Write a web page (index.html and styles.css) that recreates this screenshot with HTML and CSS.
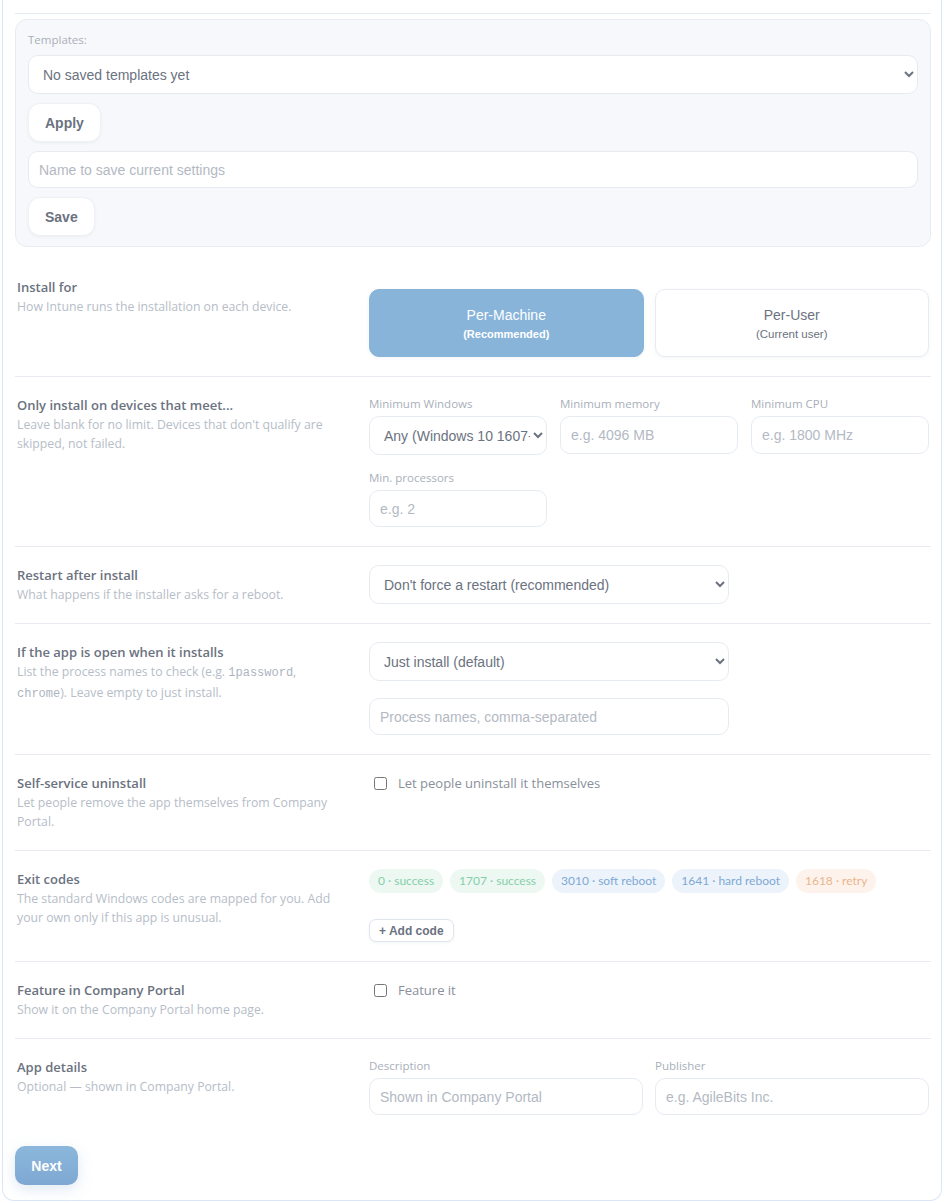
FILE: index.html
```html
<!DOCTYPE html>
<html lang="en">
<head>
    <meta charset="UTF-8"/>
    <title>Program settings</title>
    <link rel="stylesheet" href="styles.css">
</head>
<body>
<div class="card">
    <div class="card-head"></div>

    <!-- saved templates -->
    <div class="templates">
        <div class="templates-label">Templates:</div>
        <select class="field select">
            <option>No saved templates yet</option>
        </select>
        <div><button class="soft-btn">Apply</button></div>
        <input class="field short" type="text" placeholder="Name to save current settings">
        <div><button class="soft-btn">Save</button></div>
    </div>

    <div class="rows">
        <div class="row">
            <div class="row-info">
                <div class="row-title">Install for</div>
                <div class="row-desc">How Intune runs the installation on each device.</div>
            </div>
            <div class="row-ctrl">
                <div class="segmented">
                    <button class="seg seg-on">Per-Machine<small>(Recommended)</small></button>
                    <button class="seg">Per-User<small>(Current user)</small></button>
                </div>
            </div>
        </div>

        <div class="row">
            <div class="row-info">
                <div class="row-title">Only install on devices that meet...</div>
                <div class="row-desc">Leave blank for no limit. Devices that don't qualify are skipped, not failed.</div>
            </div>
            <div class="row-ctrl grid-3">
                <label class="fld">
                    <span class="fld-label">Minimum Windows</span>
                    <select class="field select tight">
                        <option>Any (Windows 10 1607+)</option>
                    </select>
                </label>
                <label class="fld">
                    <span class="fld-label">Minimum memory</span>
                    <input class="field" type="text" placeholder="e.g. 4096 MB">
                </label>
                <label class="fld">
                    <span class="fld-label">Minimum CPU</span>
                    <input class="field" type="text" placeholder="e.g. 1800 MHz">
                </label>
                <label class="fld">
                    <span class="fld-label">Min. processors</span>
                    <input class="field short" type="text" placeholder="e.g. 2">
                </label>
            </div>
        </div>

        <div class="row">
            <div class="row-info">
                <div class="row-title">Restart after install</div>
                <div class="row-desc">What happens if the installer asks for a reboot.</div>
            </div>
            <div class="row-ctrl">
                <select class="field select narrow">
                    <option>Don't force a restart (recommended)</option>
                </select>
            </div>
        </div>

        <div class="row">
            <div class="row-info">
                <div class="row-title">If the app is open when it installs</div>
                <div class="row-desc">List the process names to check (e.g. <code>1password</code>, <code>chrome</code>). Leave empty to just install.</div>
            </div>
            <div class="row-ctrl stack">
                <select class="field select narrow">
                    <option>Just install (default)</option>
                </select>
                <input class="field narrow short" type="text" placeholder="Process names, comma-separated">
            </div>
        </div>

        <div class="row">
            <div class="row-info">
                <div class="row-title">Self-service uninstall</div>
                <div class="row-desc">Let people remove the app themselves from Company Portal.</div>
            </div>
            <div class="row-ctrl">
                <label class="check"><input type="checkbox"> Let people uninstall it themselves</label>
            </div>
        </div>

        <div class="row">
            <div class="row-info">
                <div class="row-title">Exit codes</div>
                <div class="row-desc">The standard Windows codes are mapped for you. Add your own only if this app is unusual.</div>
            </div>
            <div class="row-ctrl">
                <div class="chips">
                    <span class="chip chip-green">0 · success</span>
                    <span class="chip chip-green">1707 · success</span>
                    <span class="chip chip-blue">3010 · soft reboot</span>
                    <span class="chip chip-blue">1641 · hard reboot</span>
                    <span class="chip chip-orange">1618 · retry</span>
                </div>
                <button class="add-btn">+ Add code</button>
            </div>
        </div>

        <div class="row">
            <div class="row-info">
                <div class="row-title">Feature in Company Portal</div>
                <div class="row-desc">Show it on the Company Portal home page.</div>
            </div>
            <div class="row-ctrl">
                <label class="check"><input type="checkbox"> Feature it</label>
            </div>
        </div>

        <div class="row">
            <div class="row-info">
                <div class="row-title">App details</div>
                <div class="row-desc">Optional — shown in Company Portal.</div>
            </div>
            <div class="row-ctrl grid-2">
                <label class="fld">
                    <span class="fld-label">Description</span>
                    <input class="field short" type="text" placeholder="Shown in Company Portal">
                </label>
                <label class="fld">
                    <span class="fld-label">Publisher</span>
                    <input class="field short" type="text" placeholder="e.g. AgileBits Inc.">
                </label>
            </div>
        </div>
    </div>

    <button class="next-btn">Next</button>
</div>
</body>
</html>
```

FILE: styles.css
```css
/* page */
body {
    margin: 0;
    background: #ffffff;
    font-family: "Open Sans", "Noto Sans", sans-serif;
}

.card {
    margin: 0 2px 2px 2px;
    padding: 0 10px 15px 12px;
    border: 1px solid #d9e6f5;
    border-top: none;
    border-radius: 0 0 12px 12px;
}

.card-head {
    height: 13px;
    border-bottom: 1px solid #e6ecf3;
}

/* form fields */
.field {
    display: block;
    box-sizing: border-box;
    width: 100%;
    height: 38px;
    padding: 0 10px;
    border: 1px solid #e6ebf2;
    border-radius: 10px;
    background: #ffffff;
    font-family: "Liberation Sans", Arial, sans-serif;
    font-size: 14px;
    color: #6b7280;
    outline: none;
}

.field.short {
    height: 37px;
}

.field::placeholder {
    color: #b3b9c3;
}

.select {
    height: 39px;
    padding: 0 10px;
}

.select.tight {
    padding-right: 0;
}

.narrow {
    max-width: 360px;
}

/* templates box */
.templates {
    margin-top: 5px;
    padding: 12px 12px 10px 12px;
    background: #f7f8fb;
    border: 1px solid #e8ecf2;
    border-radius: 12px;
    display: flex;
    flex-direction: column;
    gap: 9px;
}

.templates-label {
    font-size: 11.5px;
    line-height: 16px;
    color: #a9afba;
    margin-bottom: -2px;
}

.soft-btn {
    height: 39px;
    padding: 0 16px;
    border: 1px solid #eef1f5;
    border-radius: 12px;
    background: #ffffff;
    box-shadow: 0 1px 3px rgba(40, 60, 90, 0.06);
    font-family: "Liberation Sans", Arial, sans-serif;
    font-weight: bold;
    font-size: 14px;
    color: #6b7280;
}

/* setting rows */
.rows {
    margin-top: 12px;
}

.row {
    display: grid;
    grid-template-columns: 330px 1fr;
    column-gap: 22px;
    padding: 18px 2px 19px 2px;
    border-bottom: 1px solid #e8ecf2;
}

.row:last-child {
    border-bottom: none;
}

.row-title {
    font-size: 13px;
    font-weight: 600;
    line-height: 20px;
    color: #6b7280;
}

.row-desc {
    font-size: 12.25px;
    line-height: 19px;
    color: #b6bdc8;
}

.row-desc code {
    font-family: "Liberation Mono", "DejaVu Sans Mono", monospace;
    font-size: 12px;
    color: #adb4bf;
}

.segmented {
    margin-top: 12px;
    display: grid;
    grid-template-columns: 1fr 1fr;
    gap: 11px;
}

.seg {
    height: 68px;
    border: 1px solid #e8ecf2;
    border-radius: 10px;
    background: #ffffff;
    box-shadow: 0 1px 4px rgba(40, 60, 90, 0.05);
    font-family: "Liberation Sans", Arial, sans-serif;
    font-size: 14px;
    color: #6b7280;
    display: flex;
    flex-direction: column;
    align-items: center;
    justify-content: center;
    gap: 5px;
}

.seg small {
    font-size: 11.5px;
}

.seg-on {
    background: #88b4da;
    border-color: #88b4da;
    color: #ffffff;
}

.seg-on small {
    font-weight: bold;
    font-size: 11px;
}

.grid-3 {
    display: grid;
    grid-template-columns: 1fr 1fr 1fr;
    column-gap: 13px;
    row-gap: 14px;
}

.grid-2 {
    display: grid;
    grid-template-columns: 1fr 1fr;
    column-gap: 12px;
}

.fld {
    display: flex;
    flex-direction: column;
    gap: 4px;
}

.fld-label {
    font-size: 11.5px;
    line-height: 17px;
    color: #a9afba;
}

.stack {
    display: flex;
    flex-direction: column;
    gap: 17px;
}

.check {
    display: flex;
    align-items: center;
    gap: 11px;
    padding-top: 1px;
    font-size: 13px;
    color: #8a909b;
}

.check input {
    width: 13px;
    height: 13px;
    margin: 0 0 0 5px;
    accent-color: #88b4da;
}

/* exit codes */
.chips {
    display: flex;
    flex-wrap: wrap;
    gap: 7px;
}

.chip {
    height: 24px;
    line-height: 24px;
    padding: 0 9px;
    border-radius: 12px;
    font-family: Lato, "Open Sans", sans-serif;
    font-size: 12px;
}

.chip-green {
    background: #eef8f3;
    color: #84cfaa;
}

.chip-blue {
    background: #edf3fb;
    color: #7ea9d4;
}

.chip-orange {
    background: #fdf3ec;
    color: #ebb58d;
}

.add-btn {
    margin-top: 26px;
    height: 23px;
    padding: 0 9px;
    border: 1px solid #dfe5ee;
    border-radius: 7px;
    background: #ffffff;
    box-shadow: 0 1px 3px rgba(40, 60, 90, 0.06);
    font-family: "Liberation Sans", Arial, sans-serif;
    font-weight: bold;
    font-size: 12px;
    color: #6b7280;
}

.next-btn {
    display: block;
    margin-top: 12px;
    width: 63px;
    height: 39px;
    border: none;
    border-radius: 10px;
    background: linear-gradient(180deg, #8cb7dc, #7ea8d2);
    box-shadow: 0 4px 14px rgba(126, 168, 210, 0.25);
    font-family: "Liberation Sans", Arial, sans-serif;
    font-weight: bold;
    font-size: 14px;
    color: #ffffff;
}
```
